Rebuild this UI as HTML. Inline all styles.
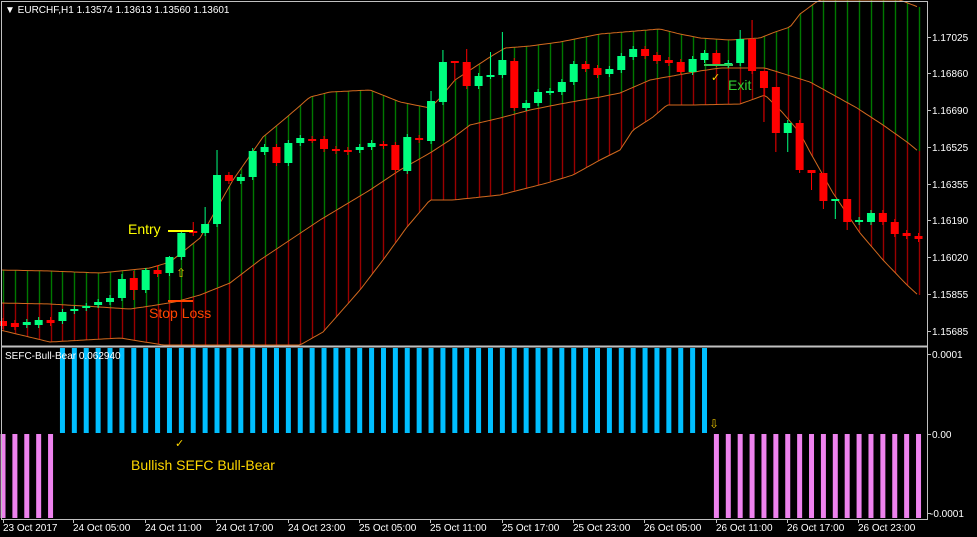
<!DOCTYPE html>
<html><head><meta charset="utf-8"><style>
html,body{margin:0;padding:0;background:#000;width:977px;height:537px;overflow:hidden}
svg{display:block}
text{font-family:"Liberation Sans",sans-serif}
</style></head><body>
<svg id="s" width="977" height="537" xmlns="http://www.w3.org/2000/svg">
<rect width="977" height="537" fill="#000"/>
<g id="bands"></g>
<g id="cand"></g>
<g id="ind"></g>
<g stroke="#c0c0c0" stroke-width="1" fill="none">
<line x1="1.5" y1="1" x2="1.5" y2="519"/>
<line x1="1" y1="1.5" x2="928" y2="1.5"/>
<line x1="927.5" y1="1" x2="927.5" y2="519"/>
<line x1="1" y1="346.5" x2="928" y2="346.5" stroke-width="2"/>
<line x1="1" y1="519.5" x2="928" y2="519.5"/>
</g>
<g id="ticks" stroke="#c0c0c0"></g>
<line x1="168" y1="231" x2="193" y2="231" stroke="#ffff00" stroke-width="2"/>
<line x1="168" y1="301" x2="193" y2="301" stroke="#ff4500" stroke-width="2"/>
<line x1="704" y1="65" x2="733" y2="65" stroke="#33cc55" stroke-width="2"/>
<text x="128" y="234" font-size="14" fill="#ffff00">Entry</text>
<text x="149" y="318" font-size="14" fill="#ff4500">Stop Loss</text>
<text x="728" y="90" font-size="14" fill="#32cd32">Exit</text>
<text x="176" y="277" font-size="12" fill="#e6c000">⇧</text>
<text x="711" y="81" font-size="11" fill="#ffd700">✓</text>
<text x="709" y="428" font-size="12" fill="#e6c000">⇩</text>
<text x="175" y="447" font-size="11" fill="#ffd700">✓</text>
<text x="131" y="470" font-size="14" fill="#ffd700">Bullish SEFC Bull-Bear</text>
<text x="5" y="13" font-size="10" fill="#fff">▼ EURCHF,H1  1.13574 1.13613 1.13560 1.13601</text>
<text x="5" y="359" font-size="10" fill="#fff">SEFC-Bull-Bear 0.062940</text>
<g font-size="10" fill="#fff">
<text x="932" y="41">1.17025</text>
<text x="932" y="77">1.16860</text>
<text x="932" y="114">1.16690</text>
<text x="932" y="151">1.16525</text>
<text x="932" y="188">1.16355</text>
<text x="932" y="224">1.16190</text>
<text x="932" y="261">1.16020</text>
<text x="932" y="298">1.15855</text>
<text x="932" y="335">1.15685</text>
<text x="932" y="358">0.0001</text>
<text x="932" y="438">0.00</text>
<text x="930" y="517">-0.0001</text>
<text x="3" y="531">23 Oct 2017</text>
<text x="73" y="531">24 Oct 05:00</text>
<text x="145" y="531">24 Oct 11:00</text>
<text x="216" y="531">24 Oct 17:00</text>
<text x="288" y="531">24 Oct 23:00</text>
<text x="359" y="531">25 Oct 05:00</text>
<text x="430" y="531">25 Oct 11:00</text>
<text x="502" y="531">25 Oct 17:00</text>
<text x="573" y="531">25 Oct 23:00</text>
<text x="644" y="531">26 Oct 05:00</text>
<text x="716" y="531">26 Oct 11:00</text>
<text x="787" y="531">26 Oct 17:00</text>
<text x="858" y="531">26 Oct 23:00</text>
</g>
</svg>
<script>
var NS="http://www.w3.org/2000/svg";
function el(p,t,a){var e=document.createElementNS(NS,t);for(var k in a)e.setAttribute(k,a[k]);p.appendChild(e);return e;}
function interp(pts,x){if(x<=pts[0][0])return pts[0][1];for(var i=1;i<pts.length;i++){if(x<=pts[i][0]){var a=pts[i-1],b=pts[i];return a[1]+(b[1]-a[1])*(x-a[0])/(b[0]-a[0]);}}return pts[pts.length-1][1];}
var U=[[0,270],[50,271],[100,273],[150,268],[170,262],[200,238],[233,180],[263,137],[287,117],[310,97],[330,92],[370,90],[400,102],[430,108],[440,98],[455,80],[490,57],[505,48],[530,46],[560,42],[600,34],[660,29],[680,34],[700,38],[730,40],[760,38],[775,32],[790,27],[800,14],[815,3],[820,0],[900,0],[918,7]];
var M=[[0,303],[50,304],[100,307],[130,309],[150,306],[175,302],[200,295],[230,283],[260,260],[290,240],[320,220],[345,205],[370,190],[400,170],[430,153],[450,140],[470,125],[500,118],[530,110],[560,104],[600,97],[620,93],[650,80],[700,71],[720,68],[765,68],[810,82],[857,108],[883,125],[907,142],[918,151]];
var L=[[0,330],[50,342],[120,338],[170,346],[200,352],[280,352],[300,345],[323,332],[360,290],[383,260],[407,227],[430,200],[453,200],[500,195],[547,183],[573,175],[600,160],[620,150],[633,130],[653,117],[667,105],[693,105],[740,104],[765,95],[783,113],[800,133],[810,152],[833,193],[860,233],[883,260],[907,285],[918,295]];
var s=document.getElementById('s'),bg=document.getElementById('bands'),cg=document.getElementById('cand'),ig=document.getElementById('ind'),tg=document.getElementById('ticks');
function cx(k){return 3+11.89*k;}
for(var k=0;k<78;k++){var x=Math.round(cx(k))+0.5;var u=interp(U,x),m=interp(M,x),l=interp(L,x);
el(bg,'line',{x1:x,y1:u,x2:x,y2:m,stroke:'#007800','stroke-width':1.4});
el(bg,'line',{x1:x,y1:m,x2:x,y2:Math.min(l,345),stroke:'#9a0000','stroke-width':1.4});}
[U,M,L].forEach(function(P){var d='';for(var x=2;x<=919;x+=3){d+=(d?'L':'M')+x+' '+Math.min(interp(P,x),345).toFixed(1);}el(bg,'path',{d:d,fill:'none',stroke:'#d2691e','stroke-width':1});});
var G='#00ff7f',R='#ff0000';
var C=[[0,321,326,R],[1,323,327,R],[2,322,325,G],[3,320,325,G],[4,320,323,R],[5,312,321,G],[6,309,311,G],[7,306,308,G],[8,302,305,G],[9,298,302,G],[10,279,298,G,274],[11,278,290,R,271,300],[12,270,290,G,268],[13,270,274,R,265],[14,257,273,G,256],[15,233,257,G],[16,231,233,R,222],[17,224,233,G,207],[18,175,224,G,150],[19,175,181,R],[20,177,181,G],[21,151,177,G],[22,147,152,G],[23,147,163,R],[24,143,163,G],[25,138,143,G],[26,139,140,R],[27,139,149,R],[28,149,151,R],[29,150,152,R],[30,147,150,G],[31,143,147,G],[32,144,146,R],[33,145,170,R],[34,137,171,G],[35,138,140,R],[36,101,141,G,91],[37,62,102,G,50],[38,61,63,R,61,81],[39,62,86,R,49],[40,76,86,G],[41,75,76,G,52],[42,60,75,G,32],[43,61,108,R],[44,103,108,G],[45,92,103,G],[46,91,92,G],[47,82,92,G],[48,64,82,G],[49,64,69,R],[50,68,75,R],[51,69,74,G],[52,56,70,G],[53,49,57,G],[54,49,56,R],[55,55,61,R],[56,60,63,R],[57,62,72,R],[58,59,72,G],[59,53,60,G],[60,53,64,R],[61,63,65,G],[62,39,63,G,30],[63,39,71,R,20],[64,71,88,R,71,122],[65,87,133,R,87,152],[66,123,133,G,120,152],[67,123,170,R],[68,170,173,R,170,190],[69,173,201,R,173,209],[70,199,201,G,199,219],[71,199,222,R,199,230],[72,220,222,G],[73,213,222,G],[74,213,222,R],[75,222,234,R],[76,233,236,R],[77,236,239,R]];
C.forEach(function(c){var x=cx(c[0]),t=c[1],b=c[2],col=c[3];var wt=c[4]!==undefined?c[4]:t-3,wb=c[5]!==undefined?c[5]:b+3;
el(cg,'line',{x1:x,y1:wt,x2:x,y2:wb,stroke:col,'stroke-width':1});
el(cg,'rect',{x:x-4,y:t,width:8,height:Math.max(b-t,2),fill:col});});
for(var k=0;k<78;k++){var x=cx(k);
if(k>=5&&k<=59)el(ig,'rect',{x:x-2.5,y:348,width:5,height:85,fill:'#00bfff'});
else el(ig,'rect',{x:x-2.5,y:434,width:5,height:84,fill:'#ee82ee'});}
[37,73,110,147,184,220,257,294,331,354,434,513].forEach(function(y){el(tg,'line',{x1:927,y1:y+0.5,x2:931,y2:y+0.5});});
[3,73,145,216,288,359,430,502,573,644,716,787,858].forEach(function(x){el(tg,'line',{x1:x+0.5,y1:519,x2:x+0.5,y2:523});});
</script>
</body></html>
